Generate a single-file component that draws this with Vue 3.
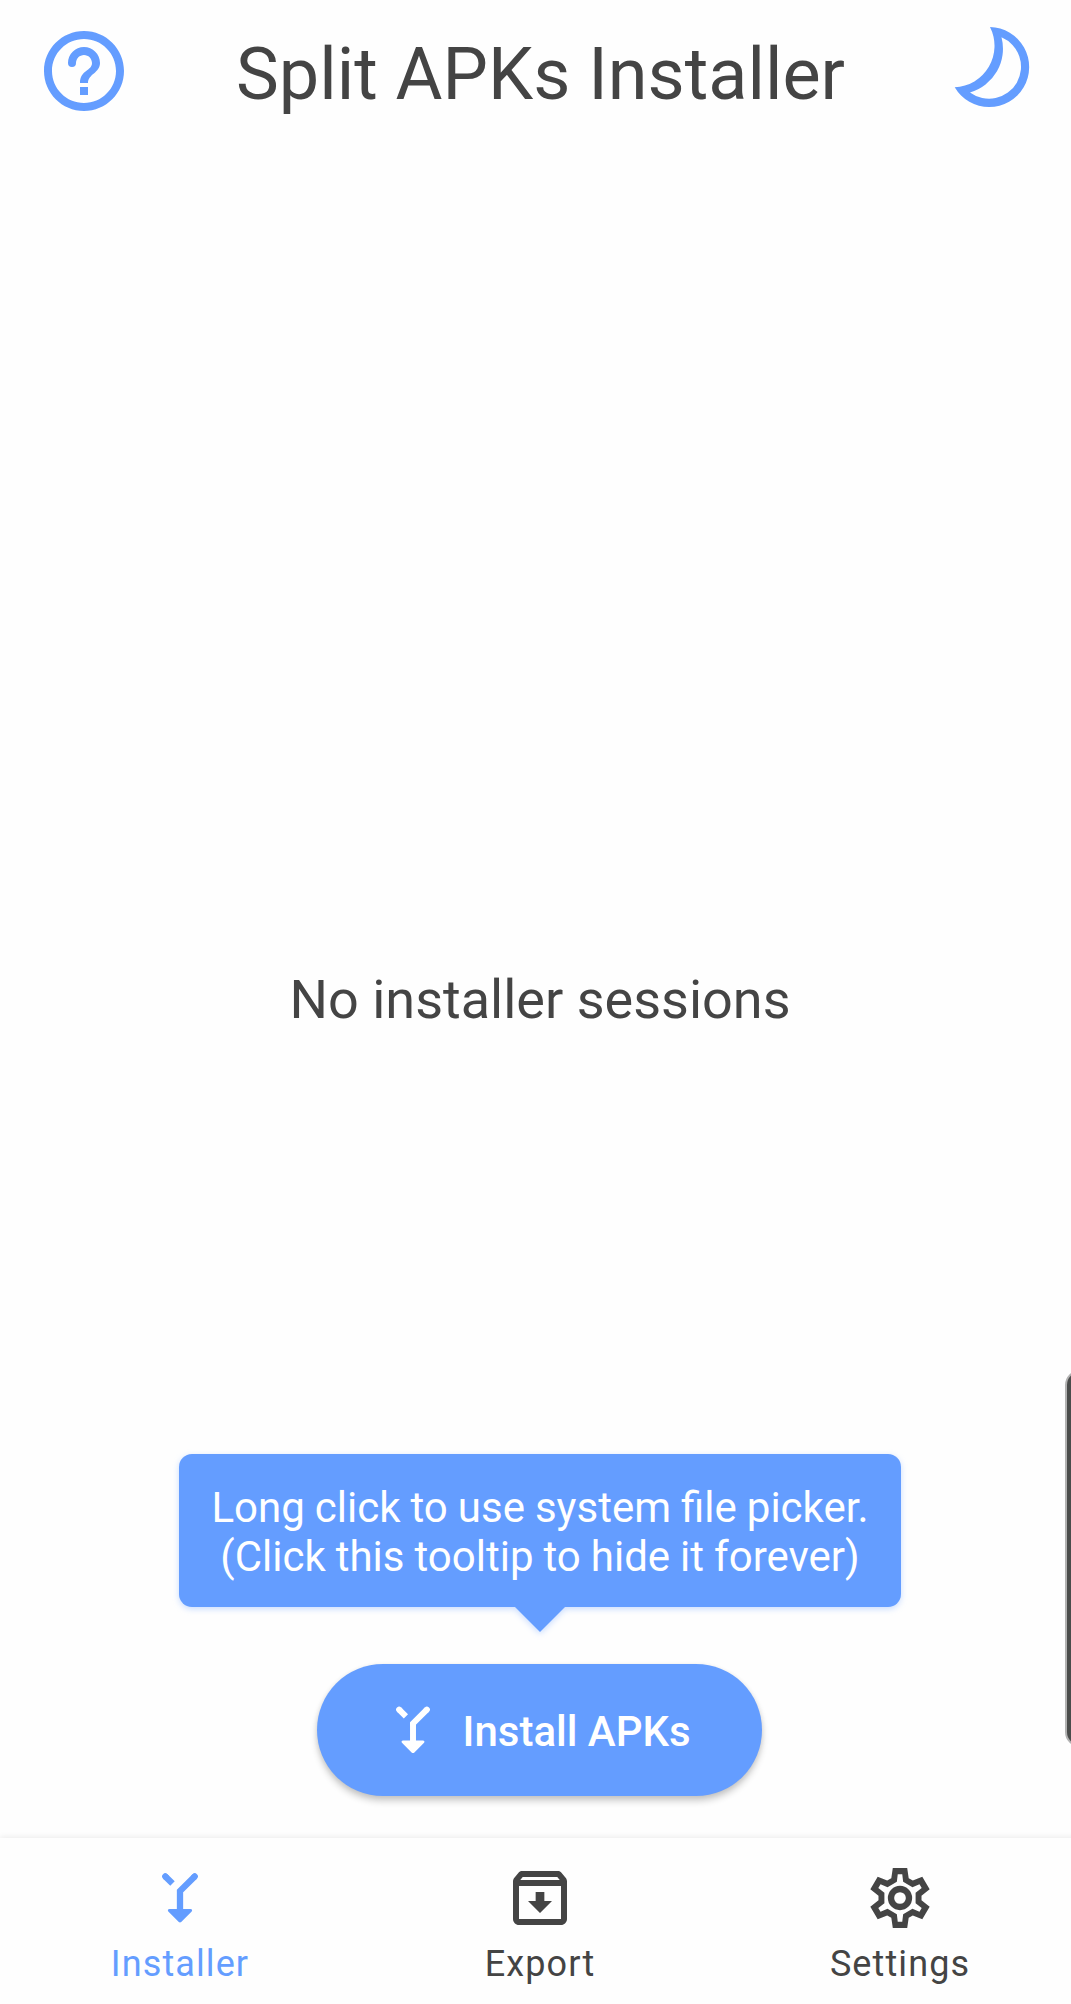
<script setup>
import { ref } from 'vue'

const activeTab = ref('installer')
const showTooltip = ref(true)

const tabs = [
  { id: 'installer', label: 'Installer' },
  { id: 'export', label: 'Export' },
  { id: 'settings', label: 'Settings' }
]
</script>

<template>
  <div class="viewport">
    <div class="screen">
      <header class="header">
        <button class="icon-button" aria-label="Help">
          <svg width="96" height="96" viewBox="0 0 24 24">
            <path d="M11 18h2v-2h-2v2zm1-16C6.480 2 2 6.480 2 12s4.480 10 10 10 10-4.480 10-10S17.520 2 12 2zm0 18c-4.410 0-8-3.590-8-8s3.590-8 8-8 8 3.590 8 8-3.590 8-8 8zm0-14c-2.210 0-4 1.790-4 4a1 1 0 0 0 2 0c0-1.100.9-2 2-2s2 .9 2 2c0 2-3 1.750-3 5h2c0-2.250 3-2.500 3-5 0-2.210-1.790-4-4-4z" />
          </svg>
        </button>
        <h1 class="title">Split APKs Installer</h1>
        <button class="icon-button" aria-label="Theme">
          <svg width="96" height="96" viewBox="0 0 96 96">
            <path fill-rule="evenodd" d="M41 4A40 40 0 1 1 5.700 64.300A41.500 41.500 0 0 0 41 4ZM52.500 14.300A45.500 45.500 0 0 1 21 69.500A32 32 0 1 0 52.500 14.300Z" />
          </svg>
        </button>
      </header>

      <main class="content">
        <p class="empty">No installer sessions</p>
        <div class="actions">
          <div v-if="showTooltip" class="tooltip" @click="showTooltip = false">
            Long click to use system file picker.<br />(Click this tooltip to hide it forever)
          </div>
          <button class="install">
            <svg width="68" height="68" viewBox="0 0 24 24">
              <path class="line cap" d="M7.100 4.800l.1.100M16.900 4.800l-.1.100" />
              <path class="line" d="M7.100 4.800l2.400 2.400M16.900 4.800L12 9.700V17" />
              <path d="M8.500 15.700h7c.5 0 .7.500.4.800L12.400 20c-.2.200-.6.200-.8 0l-3.500-3.500c-.3-.3-.1-.8.400-.8z" />
            </svg>
            <span class="install-text">Install APKs</span>
          </button>
        </div>
      </main>

      <nav class="nav">
        <button
          v-for="tab in tabs"
          :key="tab.id"
          class="tab"
          :class="{ active: tab.id === activeTab }"
          @click="activeTab = tab.id"
        >
          <svg width="72" height="72" viewBox="0 0 24 24">
            <template v-if="tab.id === 'installer'">
              <path class="line cap" d="M7.100 4.800l.1.100M16.900 4.800l-.1.100" />
              <path class="line" d="M7.100 4.800l2.400 2.400M16.900 4.800L12 9.700V17" />
              <path d="M8.500 15.700h7c.5 0 .7.500.4.800L12.400 20c-.2.200-.6.200-.8 0l-3.500-3.500c-.3-.3-.1-.8.400-.8z" />
            </template>
            <path
              v-else-if="tab.id === 'export'"
              fill-rule="evenodd"
              d="M20.540 5.230l-1.390-1.680C18.880 3.210 18.470 3 18 3H6c-.47 0-.88.210-1.160.550L3.460 5.230C3.170 5.570 3 6.020 3 6.500V19c0 1.100.9 2 2 2h14c1.100 0 2-.9 2-2V6.500c0-.48-.17-.93-.46-1.270zM6.240 5h11.520l.83 1H5.420l.82-1zM5 19V8h14v11H5zm8.450-9h-2.900v3H8l4 4 4-4h-2.550z"
            />
            <template v-else>
              <path
                fill-rule="evenodd"
                d="M9.600 2h4.800l.5 3.400 1.370.8 3.160-1.320 2.460 4.240-2.720 2.090v1.580l2.720 2.090-2.460 4.240-3.160-1.320-1.370.8-.5 3.400H9.600l-.5-3.400-1.370-.8-3.160 1.320-2.460-4.240 2.720-2.090v-1.580L2.110 9.120l2.460-4.240L7.730 6.200l1.370-.8zM10.950 6.600L7.850 8.400l-2.340-1-.74 1.280L6.800 10.250v3.500l-2.030 1.570.74 1.280 2.340-1 3.100 1.800.3 2.500h1.500l.3-2.500 3.100-1.800 2.340 1 .74-1.280-2.030-1.570v-3.500l2.030-1.570-.74-1.280-2.340 1-3.100-1.800-.3-2.500h-1.500z"
              />
              <circle class="line" cx="12" cy="12" r="3" />
            </template>
          </svg>
          <span class="label">{{ tab.label }}</span>
        </button>
      </nav>
    </div>
    <div class="edge-handle"></div>
  </div>
</template>

<style>
body {
  margin: 0;
}
</style>

<style scoped>
.viewport {
  position: relative;
  height: 2004px;
  overflow: hidden;
  background: #fefefe;
  color: #444;
  font-family: Roboto, sans-serif;
}

.screen {
  display: flex;
  flex-direction: column;
  width: 1080px;
  height: 100%;
}

button {
  padding: 0;
  border: 0;
  background: none;
  color: inherit;
  font: inherit;
}

svg {
  display: block;
  fill: currentColor;
}

.header {
  display: flex;
  align-items: center;
  justify-content: space-between;
  height: 142px;
  padding: 0 35px 0 36px;
  box-sizing: border-box;
}

.icon-button {
  color: #649dff;
}

.title {
  margin: 7px 0 0;
  font-size: 72px;
  font-weight: 400;
  line-height: 84px;
  white-space: nowrap;
}

.content {
  flex: 1;
  display: flex;
  flex-direction: column;
  align-items: center;
  justify-content: space-between;
}

.empty {
  margin: 826px 0 0;
  font-size: 54px;
  line-height: 63px;
}

.actions {
  display: flex;
  flex-direction: column;
  align-items: center;
  gap: 57px;
  margin-bottom: 42px;
}

.tooltip {
  position: relative;
  width: 722px;
  height: 153px;
  padding-top: 29px;
  box-sizing: border-box;
  border-radius: 13px;
  background: #649dff;
  color: #fff;
  font-size: 42px;
  line-height: 49px;
  word-spacing: -0.4px;
  text-align: center;
  filter: drop-shadow(0 2px 3px rgba(100, 157, 255, 0.35));
}

.tooltip::after {
  content: '';
  position: absolute;
  top: 152px;
  left: 335px;
  border: 26px solid transparent;
  border-top-color: #649dff;
  border-bottom: 0;
}

.install {
  display: flex;
  align-items: center;
  width: 445px;
  height: 132px;
  margin-right: 2px;
  padding-left: 62px;
  gap: 16px;
  border-radius: 66px;
  background: #649dff;
  box-shadow: 0 5px 7px rgba(0, 0, 0, 0.2), 0 1px 5px rgba(0, 0, 0, 0.07);
  color: #fff;
  font-size: 42px;
  font-weight: 500;
}

.install-text {
  padding-top: 2px;
}

.nav {
  display: flex;
  height: 166px;
  background: #fefefe;
  box-shadow: 0 -1px 6px rgba(0, 0, 0, 0.08);
}

.tab {
  flex: 1;
  display: flex;
  flex-direction: column;
  align-items: center;
  padding-top: 24px;
}

.label {
  margin-top: 9px;
  font-size: 36px;
  line-height: 42px;
  letter-spacing: 1.1px;
}

.active {
  color: #649dff;
}

.line {
  fill: none;
  stroke: currentColor;
  stroke-width: 2.1;
}

.cap {
  stroke-linecap: round;
}

/* system side panel handle, partly off the right edge */
.edge-handle {
  position: absolute;
  top: 1370px;
  right: -24px;
  width: 30px;
  height: 377px;
  box-sizing: border-box;
  border: 2px solid #b2b2b2;
  border-radius: 18px;
  background: #4a4c4b;
}
</style>
